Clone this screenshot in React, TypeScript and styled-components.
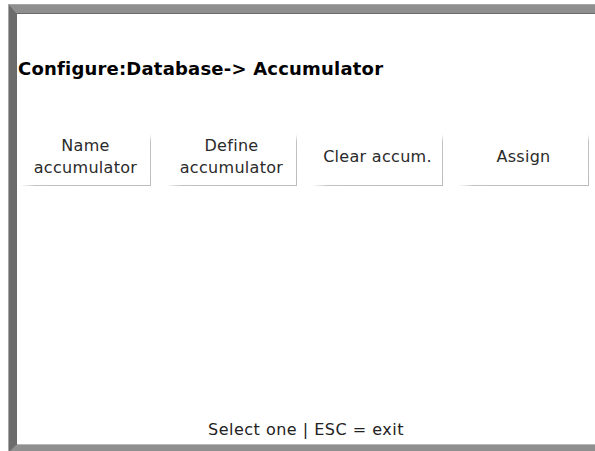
import React from "react";
import styled, { createGlobalStyle } from "styled-components";

const GlobalStyle = createGlobalStyle`
  html, body {
    margin: 0;
    padding: 0;
    background: #ffffff;
    overflow: hidden;
  }
  body {
    font-family: "DejaVu Sans", Verdana, sans-serif;
  }
`;

const Page = styled.div`
  width: 595px;
  height: 451px;
  padding: 5px 0 0 9px;
  box-sizing: border-box;
  background: #ffffff;
  overflow: hidden;
`;

const Frame = styled.div`
  width: 594px;
  height: 447px;
  box-sizing: border-box;
  border-style: solid;
  border-width: 8px 7px 7px 7px;
  border-color: #8f8f8f;
  border-left-color: #6c6c6c;
  box-shadow: inset 1px 1px 0 #6a6a6a, inset -1px -1px 0 #b8b8b8,
    0 0 0 1px #a6a6a6;
  background: #ffffff;
  display: flex;
  flex-direction: column;
`;

const Title = styled.h1`
  margin: 0;
  padding: 45px 0 0 2px;
  font-family: "DejaVu Sans", Verdana, sans-serif;
  font-weight: bold;
  font-size: 18px;
  line-height: 22px;
  letter-spacing: 0.2px;
  color: #000000;
`;

const ButtonRow = styled.div`
  display: grid;
  grid-template-columns: repeat(4, 131px);
  column-gap: 15px;
  margin-top: 54px;
  padding-left: 4px;
`;

const MenuButton = styled.button`
  height: 52px;
  box-sizing: border-box;
  padding: 0 0 6px 0;
  margin: 0;
  border: none;
  background-color: #ffffff;
  background-image: linear-gradient(to right, #ffffff 0%, #c2c2c2 12%, #bcbcbc 100%),
    linear-gradient(to bottom, #ffffff 0%, #c2c2c2 15%, #bcbcbc 100%);
  background-size: 100% 1px, 1px 100%;
  background-position: left bottom, right top;
  background-repeat: no-repeat;
  font-family: "DejaVu Sans", Verdana, sans-serif;
  font-size: 16px;
  line-height: 22px;
  letter-spacing: 0.3px;
  color: #2a2a2a;
  display: flex;
  flex-direction: column;
  align-items: center;
  justify-content: center;
  cursor: pointer;
`;

const Footer = styled.div`
  margin-top: auto;
  padding-bottom: 5px;
  text-align: center;
  font-family: "DejaVu Sans", Verdana, sans-serif;
  font-size: 16px;
  line-height: 20px;
  letter-spacing: 0.5px;
  color: #222222;
`;

const buttons: string[][] = [
  ["Name", "accumulator"],
  ["Define", "accumulator"],
  ["Clear accum."],
  ["Assign"],
];

export default function App() {
  return (
    <>
      <GlobalStyle />
      <Page>
        <Frame>
          <Title>Configure:Database-&gt; Accumulator</Title>
          <ButtonRow>
            {buttons.map((lines) => (
              <MenuButton key={lines.join(" ")}>
                {lines.map((l) => (
                  <span key={l}>{l}</span>
                ))}
              </MenuButton>
            ))}
          </ButtonRow>
          <Footer>Select one | ESC = exit</Footer>
        </Frame>
      </Page>
    </>
  );
}
